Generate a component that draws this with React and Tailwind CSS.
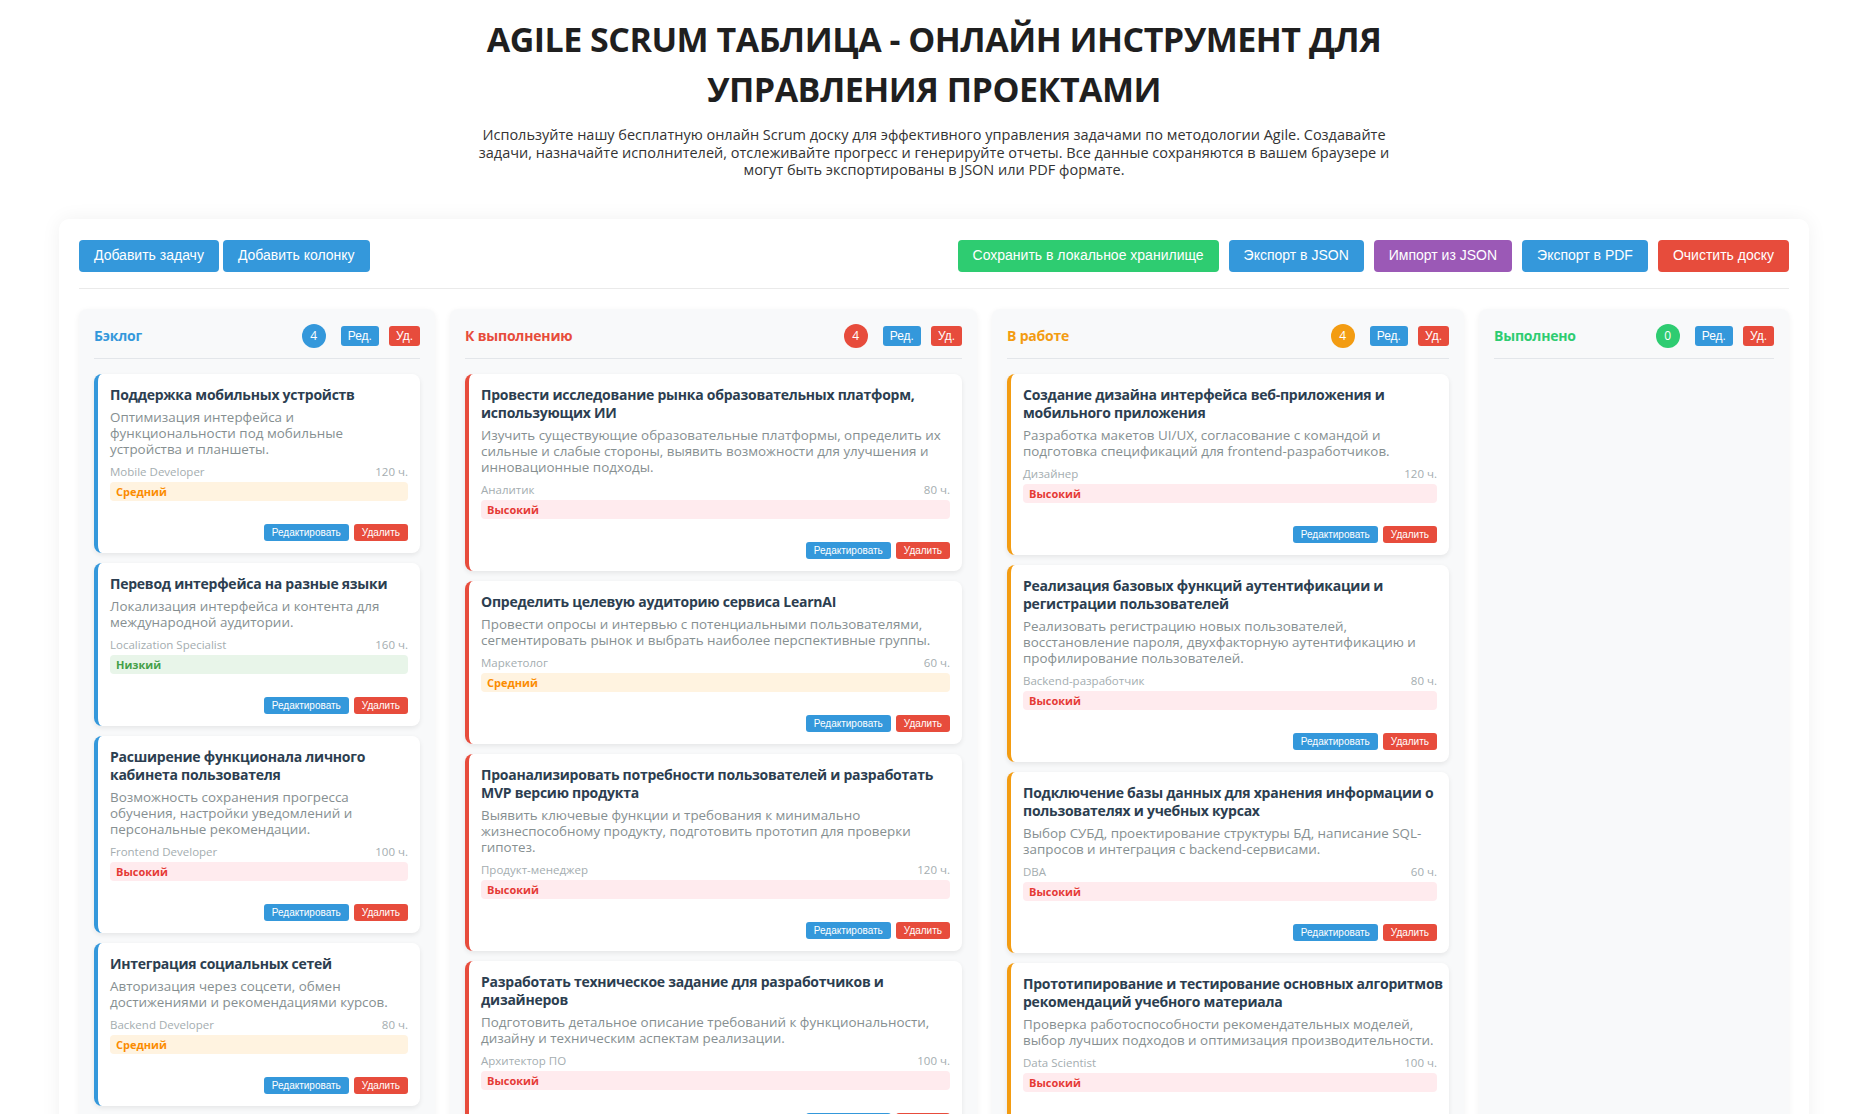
import React from "react";

const FONT = "font-['Open_Sans',sans-serif]";
const BTN = "font-['Liberation_Sans',Arial,sans-serif]";

const PRIORITY = {
  high: { label: "Высокий", cls: "bg-[#ffebee] text-[#e53935]" },
  mid: { label: "Средний", cls: "bg-[#fff3e0] text-[#fb8c00]" },
  low: { label: "Низкий", cls: "bg-[#e8f5e9] text-[#43a047]" },
};

const columns = [
  {
    title: "Бэклог",
    width: "w-[356px]",
    text: "text-[#3498db]",
    badge: "bg-[#3498db]",
    border: "border-[#3498db]",
    tasks: [
      {
        title: ["Поддержка мобильных устройств"],
        desc: ["Оптимизация интерфейса и", "функциональности под мобильные", "устройства и планшеты."],
        who: "Mobile Developer",
        hours: "120 ч.",
        p: "mid",
      },
      {
        title: ["Перевод интерфейса на разные языки"],
        desc: ["Локализация интерфейса и контента для", "международной аудитории."],
        who: "Localization Specialist",
        hours: "160 ч.",
        p: "low",
      },
      {
        title: ["Расширение функционала личного", "кабинета пользователя"],
        desc: ["Возможность сохранения прогресса", "обучения, настройки уведомлений и", "персональные рекомендации."],
        who: "Frontend Developer",
        hours: "100 ч.",
        p: "high",
      },
      {
        title: ["Интеграция социальных сетей"],
        desc: ["Авторизация через соцсети, обмен", "достижениями и рекомендациями курсов."],
        who: "Backend Developer",
        hours: "80 ч.",
        p: "mid",
      },
    ],
  },
  {
    title: "К выполнению",
    width: "w-[527px]",
    text: "text-[#e74c3c]",
    badge: "bg-[#e74c3c]",
    border: "border-[#e74c3c]",
    tasks: [
      {
        title: ["Провести исследование рынка образовательных платформ,", "использующих ИИ"],
        desc: [
          "Изучить существующие образовательные платформы, определить их",
          "сильные и слабые стороны, выявить возможности для улучшения и",
          "инновационные подходы.",
        ],
        who: "Аналитик",
        hours: "80 ч.",
        p: "high",
      },
      {
        title: ["Определить целевую аудиторию сервиса LearnAI"],
        desc: [
          "Провести опросы и интервью с потенциальными пользователями,",
          "сегментировать рынок и выбрать наиболее перспективные группы.",
        ],
        who: "Маркетолог",
        hours: "60 ч.",
        p: "mid",
      },
      {
        title: ["Проанализировать потребности пользователей и разработать", "MVP версию продукта"],
        desc: [
          "Выявить ключевые функции и требования к минимально",
          "жизнеспособному продукту, подготовить прототип для проверки",
          "гипотез.",
        ],
        who: "Продукт-менеджер",
        hours: "120 ч.",
        p: "high",
      },
      {
        title: ["Разработать техническое задание для разработчиков и", "дизайнеров"],
        desc: [
          "Подготовить детальное описание требований к функциональности,",
          "дизайну и техническим аспектам реализации.",
        ],
        who: "Архитектор ПО",
        hours: "100 ч.",
        p: "high",
      },
    ],
  },
  {
    title: "В работе",
    width: "w-[472px]",
    text: "text-[#f39c12]",
    badge: "bg-[#f39c12]",
    border: "border-[#f39c12]",
    tasks: [
      {
        title: ["Создание дизайна интерфейса веб-приложения и", "мобильного приложения"],
        desc: [
          "Разработка макетов UI/UX, согласование с командой и",
          "подготовка спецификаций для frontend-разработчиков.",
        ],
        who: "Дизайнер",
        hours: "120 ч.",
        p: "high",
      },
      {
        title: ["Реализация базовых функций аутентификации и", "регистрации пользователей"],
        desc: [
          "Реализовать регистрацию новых пользователей,",
          "восстановление пароля, двухфакторную аутентификацию и",
          "профилирование пользователей.",
        ],
        who: "Backend-разработчик",
        hours: "80 ч.",
        p: "high",
      },
      {
        title: ["Подключение базы данных для хранения информации о", "пользователях и учебных курсах"],
        desc: [
          "Выбор СУБД, проектирование структуры БД, написание SQL-",
          "запросов и интеграция с backend-сервисами.",
        ],
        who: "DBA",
        hours: "60 ч.",
        p: "high",
      },
      {
        title: ["Прототипирование и тестирование основных алгоритмов", "рекомендаций учебного материала"],
        desc: [
          "Проверка работоспособности рекомендательных моделей,",
          "выбор лучших подходов и оптимизация производительности.",
        ],
        who: "Data Scientist",
        hours: "100 ч.",
        p: "high",
      },
    ],
  },
  {
    title: "Выполнено",
    width: "w-[310px]",
    text: "text-[#2ecc71]",
    badge: "bg-[#2ecc71]",
    border: "border-[#2ecc71]",
    tasks: [],
  },
];

function TaskCard({ task, border, first }) {
  const pr = PRIORITY[task.p];
  return (
    <div
      className={`${first ? "mt-[15px]" : "mt-[10px]"} rounded-[8px] border-l-4 ${border} bg-white p-3 shadow-[0_2px_5px_rgba(0,0,0,0.08)]`}
    >
      <div className="text-[14px] font-bold leading-[18px] tracking-[-0.25px] text-[#2c3e50]">
        {task.title.map((l, i) => (
          <div key={i} className="whitespace-nowrap">
            {l}
          </div>
        ))}
      </div>
      <div className="mt-[5px] text-[13.4px] leading-[16px] text-[#868f91]">
        {task.desc.map((l, i) => (
          <div key={i} className="whitespace-nowrap">
            {l}
          </div>
        ))}
      </div>
      <div className="mt-[8px] flex justify-between text-[11.5px] leading-[14px] text-[#a4adb0]">
        <span>{task.who}</span>
        <span>{task.hours}</span>
      </div>
      <div className={`mt-[3px] h-[19px] rounded-[4px] px-[6px] text-[11px] font-bold leading-[19px] ${pr.cls}`}>
        {pr.label}
      </div>
      <div className={`mt-[23px] flex justify-end gap-[5px] ${BTN}`}>
        <button className="h-[17px] rounded-[3px] bg-[#3498db] px-2 text-[10px] leading-[17px] text-white">
          Редактировать
        </button>
        <button className="h-[17px] rounded-[3px] bg-[#e74c3c] px-2 text-[10px] leading-[17px] text-white">
          Удалить
        </button>
      </div>
    </div>
  );
}

function Column({ col }) {
  return (
    <div className={`${col.width} shrink-0 rounded-[8px] bg-[#f8f9fa] p-[15px] shadow-[0_2px_6px_rgba(0,0,0,0.06)]`}>
      <div className="flex h-[35px] items-start border-b border-[#e3e6ea] pb-[10px]">
        <div className={`flex h-6 flex-1 items-center text-[14px] font-bold tracking-[-0.2px] ${col.text}`}>
          {col.title}
        </div>
        <div
          className={`mr-[15px] flex h-6 w-6 items-center justify-center rounded-full text-[12px] text-white ${col.badge}`}
        >
          {col.tasks.length}
        </div>
        <div className={`mt-[2px] flex gap-[10px] ${BTN}`}>
          <button className="h-5 rounded-[3px] bg-[#3498db] px-[7px] text-[12px] leading-5 text-white">Ред.</button>
          <button className="h-5 rounded-[3px] bg-[#e74c3c] px-[7px] text-[12px] leading-5 text-white">Уд.</button>
        </div>
      </div>
      <div className="flex flex-col">
        {col.tasks.map((t, i) => (
          <TaskCard key={i} task={t} border={col.border} first={i === 0} />
        ))}
      </div>
    </div>
  );
}

export default function App() {
  return (
    <div className={`min-h-screen bg-white ${FONT}`}>
      <header className="pt-[14px] text-center">
        <h1 className="text-[34px] font-bold leading-[50px] tracking-[-0.5px] text-[#1f1f1f]">
          AGILE SCRUM ТАБЛИЦА - ОНЛАЙН ИНСТРУМЕНТ ДЛЯ
          <br />
          УПРАВЛЕНИЯ ПРОЕКТАМИ
        </h1>
        <p className="mt-[12px] text-[14.5px] leading-[17.5px] text-[#333]">
          Используйте нашу бесплатную онлайн Scrum доску для эффективного управления задачами по методологии Agile. Создавайте
          <br />
          задачи, назначайте исполнителей, отслеживайте прогресс и генерируйте отчеты. Все данные сохраняются в вашем браузере и
          <br />
          могут быть экспортированы в JSON или PDF формате.
        </p>
      </header>

      <main className="mx-auto mt-[40px] w-[1750px] rounded-[10px] bg-white px-5 pt-[21px] pb-5 shadow-[0_0_20px_rgba(0,0,0,0.06)]">
        <div className={`flex items-center justify-between border-b border-[#eaeaea] pb-4 ${BTN}`}>
          <div className="flex gap-1">
            <button className="h-8 rounded-[4px] bg-[#3498db] px-[15px] text-[14px] text-white">Добавить задачу</button>
            <button className="h-8 rounded-[4px] bg-[#3498db] px-[15px] text-[14px] text-white">Добавить колонку</button>
          </div>
          <div className="flex gap-[10px]">
            <button className="h-8 rounded-[4px] bg-[#2ecc71] px-[15px] text-[14px] text-white">
              Сохранить в локальное хранилище
            </button>
            <button className="h-8 rounded-[4px] bg-[#3498db] px-[15px] text-[14px] text-white">Экспорт в JSON</button>
            <button className="h-8 rounded-[4px] bg-[#9b59b6] px-[15px] text-[14px] text-white">Импорт из JSON</button>
            <button className="h-8 rounded-[4px] bg-[#3498db] px-[15px] text-[14px] text-white">Экспорт в PDF</button>
            <button className="h-8 rounded-[4px] bg-[#e74c3c] px-[15px] text-[14px] text-white">Очистить доску</button>
          </div>
        </div>
        <div className="mt-5 flex items-stretch gap-[15px]">
          {columns.map((c, i) => (
            <Column key={i} col={c} />
          ))}
        </div>
      </main>
    </div>
  );
}
